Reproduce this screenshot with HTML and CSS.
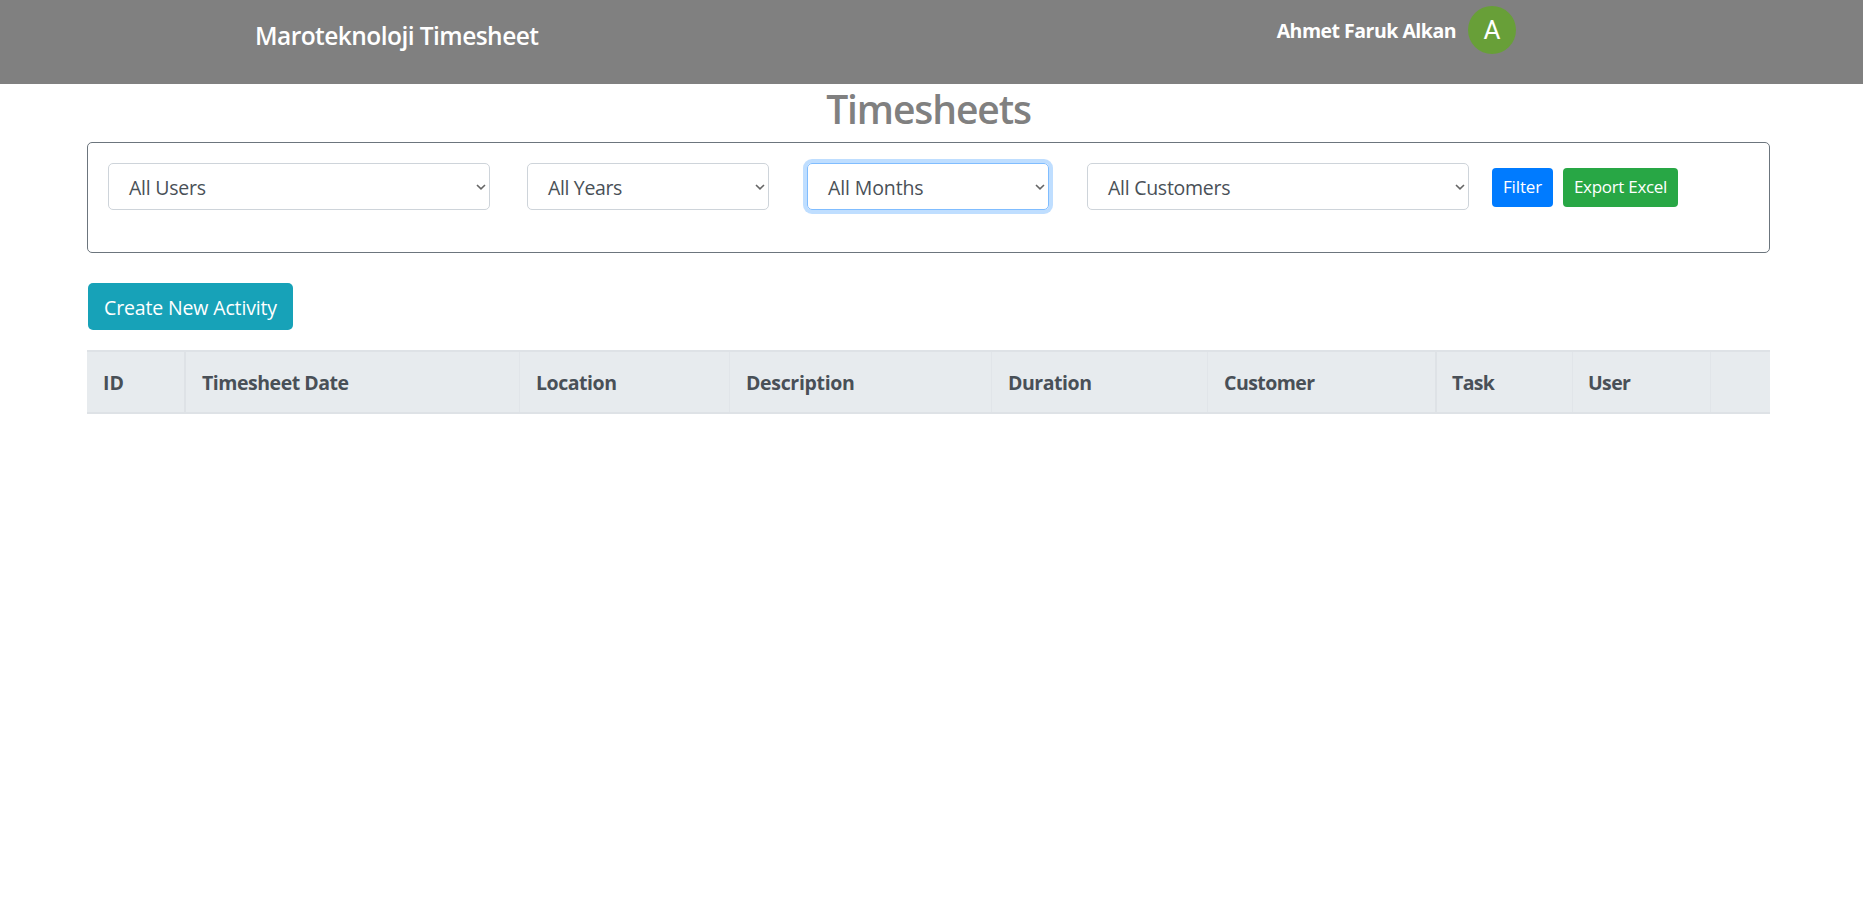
FILE: index.html
```html
<!DOCTYPE html>
<html lang="en">
<head>
<meta charset="utf-8">
<title>Timesheets</title>
<link rel="stylesheet" href="styles.css">
</head>
<body>
<header class="navbar">
  <div class="brand"><span class="t-brand">Maroteknoloji Timesheet</span></div>
  <div class="account"><span class="t-name">Ahmet Faruk Alkan</span><span class="avatar">A</span></div>
</header>
<main class="page">
  <h1 class="title"><span class="t-title">Timesheets</span></h1>
  <section class="filters">
    <div class="select users"><span class="t-users">All Users</span><svg class="caret" viewBox="0 0 10 6"><path d="M1 1l4 3.8L9 1"/></svg></div>
    <div class="select years"><span class="t-years">All Years</span><svg class="caret" viewBox="0 0 10 6"><path d="M1 1l4 3.8L9 1"/></svg></div>
    <div class="select months focused"><span class="t-months">All Months</span><svg class="caret" viewBox="0 0 10 6"><path d="M1 1l4 3.8L9 1"/></svg></div>
    <div class="select customers"><span class="t-customers">All Customers</span><svg class="caret" viewBox="0 0 10 6"><path d="M1 1l4 3.8L9 1"/></svg></div>
    <div class="btn primary"><span class="t-filter">Filter</span></div>
    <div class="btn success"><span class="t-export">Export Excel</span></div>
  </section>
  <div class="create"><span class="t-create">Create New Activity</span></div>
  <div class="thead">
    <div class="th strong"><span>ID</span></div>
    <div class="th"><span class="h-date">Timesheet Date</span></div>
    <div class="th"><span class="h-loc">Location</span></div>
    <div class="th"><span class="h-desc">Description</span></div>
    <div class="th"><span class="h-dur">Duration</span></div>
    <div class="th strong"><span class="h-cust">Customer</span></div>
    <div class="th"><span class="h-task">Task</span></div>
    <div class="th"><span class="h-user">User</span></div>
    <div class="th"></div>
  </div>
</main>
</body>
</html>
```
FILE: styles.css
```css
* { box-sizing: border-box; }
body { margin: 0; background: #fff; font-family: "Open Sans", "Noto Sans", sans-serif; font-size: 19.5px; line-height: 30px; color: #495057; white-space: nowrap; }
.navbar { height: 84px; background: #808080; color: #fff; display: flex; justify-content: space-between; padding: 0 347px 0 255px; }
.brand { font-size: 24.5px; font-weight: 600; padding-top: 21px; }
.account { display: flex; align-items: flex-start; font-weight: 700; padding-top: 6px; }
.t-name { margin: 10px 12px 0 0; }
.avatar { width: 48px; height: 48px; border-radius: 50%; background: #689f38; font: 400 26px/49px Roboto, sans-serif; text-align: center; }
.page { padding: 0 93px 0 87px; }
.title { margin: 0; height: 58px; font-size: 39px; line-height: 50px; font-weight: 600; color: #808080; text-align: center; }
.filters { height: 111px; border: 1px solid #6c757d; border-radius: 5px; display: flex; align-items: flex-start; padding: 20px 0 0 20px; }
.select { height: 47px; border: 1px solid #ced4da; border-radius: 5px; display: flex; align-items: center; justify-content: space-between; padding: 0 3px 0 20px; }
.select span { padding-top: 2px; }
.users { width: 382px; margin-right: 37px; }
.years { width: 242px; margin-right: 38px; }
.months { width: 242px; margin-right: 38px; }
.customers { width: 382px; margin-right: 23px; }
.focused { border-color: #80bdff; box-shadow: 0 0 0 4px rgba(0, 123, 255, .25); }
.caret { width: 10px; height: 6px; fill: none; stroke: #666; stroke-width: 1.6; }
.btn { height: 39px; margin: 5px 10px 0 0; border-radius: 4px; color: #fff; font-size: 17px; line-height: 38px; text-align: center; }
.primary { width: 61px; background: #007bff; }
.success { width: 115px; background: #28a745; }
.create { width: 205px; height: 47px; margin: 30px 0 20px 1px; border-radius: 5px; background: #17a2b8; color: #fff; line-height: 49px; text-align: center; }
.thead { height: 64px; display: grid; grid-template-columns: 99px 334px 210px 262px 216px 229px 136px 138px 59px; background: #e7ebee; border-top: 2px solid #dee2e6; border-bottom: 2px solid #dee2e6; font-weight: 700; }
.th { padding: 16px 0 0 16px; border-right: 1px solid #e1e5e9; }
.th:last-child { border-right: 0; }
.th.strong { border-right: 2px solid #dee2e6; }

/* Label tracking */
.t-brand { letter-spacing: -.55px; }
.t-name { letter-spacing: -.5px; }
.t-title { letter-spacing: -1.1px; }
.t-users { letter-spacing: -.25px; }
.t-years { letter-spacing: -.35px; }
.t-months { letter-spacing: -.12px; }
.t-customers { letter-spacing: -.27px; }
.t-filter { letter-spacing: -.15px; }
.t-export { letter-spacing: -.3px; }
.t-create { letter-spacing: -.15px; }
.h-date { letter-spacing: -.47px; }
.h-loc, .h-dur { letter-spacing: -.45px; }
.h-desc { letter-spacing: -.33px; }
.h-cust { letter-spacing: -.55px; }
.h-task, .h-user { letter-spacing: -.65px; margin-left: -1px; }
```
